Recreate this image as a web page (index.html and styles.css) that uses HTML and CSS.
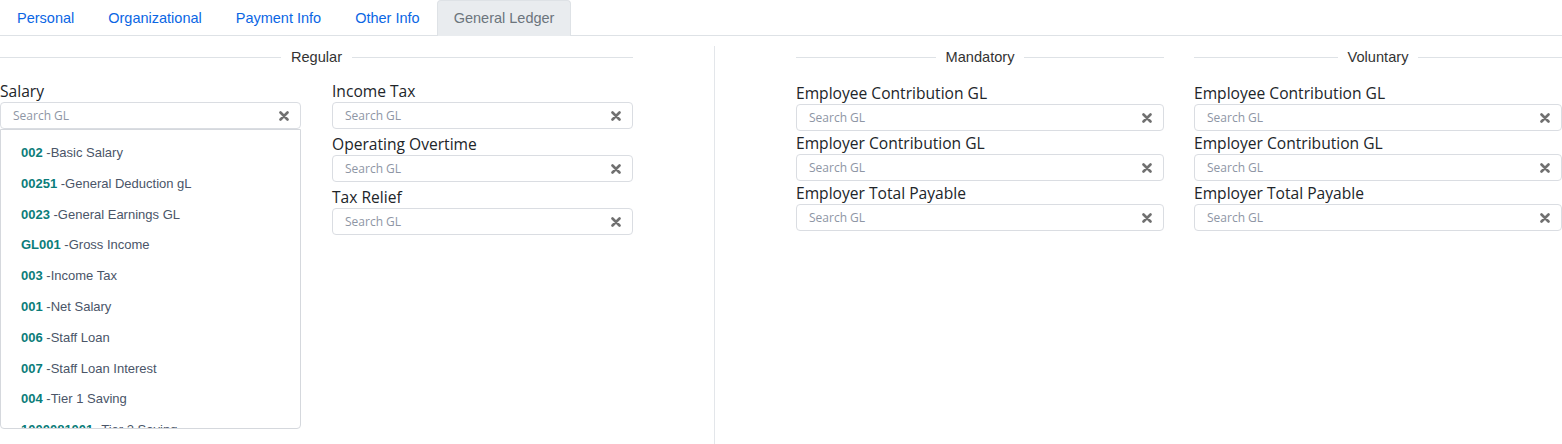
FILE: index.html
```html
<!DOCTYPE html>
<html lang="en">
<head>
<meta charset="utf-8">
<title>General Ledger</title>
<link rel="stylesheet" href="styles.css">
</head>
<body>
<nav class="tabs">
  <a class="tab" href="#">Personal</a>
  <a class="tab" href="#">Organizational</a>
  <a class="tab" href="#">Payment Info</a>
  <a class="tab" href="#">Other Info</a>
  <a class="tab active" href="#">General Ledger</a>
</nav>
<main class="content">
  <section class="regular">
    <h3 class="sec-title"><span>Regular</span></h3>
    <div class="regular-grid">
      <div class="col">
        <div class="field">
          <label class="label">Salary</label>
          <div class="input"><span class="ph">Search GL</span><svg class="clear" viewBox="0 0 10 10"><path d="M1.5 1.5 8.5 8.5M8.5 1.5 1.5 8.5"/></svg></div>
          <ul class="dropdown">
            <li><b>002</b> -Basic Salary</li>
            <li><b>00251</b> -General Deduction gL</li>
            <li><b>0023</b> -General Earnings GL</li>
            <li><b>GL001</b> -Gross Income</li>
            <li><b>003</b> -Income Tax</li>
            <li><b>001</b> -Net Salary</li>
            <li><b>006</b> -Staff Loan</li>
            <li><b>007</b> -Staff Loan Interest</li>
            <li><b>004</b> -Tier 1 Saving</li>
            <li><b>1000081001</b> -Tier 2 Saving</li>
          </ul>
        </div>
      </div>
      <div class="col col-fields">
        <div class="field">
          <label class="label">Income Tax</label>
          <div class="input"><span class="ph">Search GL</span><svg class="clear" viewBox="0 0 10 10"><path d="M1.5 1.5 8.5 8.5M8.5 1.5 1.5 8.5"/></svg></div>
        </div>
        <div class="field">
          <label class="label">Operating Overtime</label>
          <div class="input"><span class="ph">Search GL</span><svg class="clear" viewBox="0 0 10 10"><path d="M1.5 1.5 8.5 8.5M8.5 1.5 1.5 8.5"/></svg></div>
        </div>
        <div class="field">
          <label class="label">Tax Relief</label>
          <div class="input"><span class="ph">Search GL</span><svg class="clear" viewBox="0 0 10 10"><path d="M1.5 1.5 8.5 8.5M8.5 1.5 1.5 8.5"/></svg></div>
        </div>
      </div>
    </div>
  </section>
  <div class="vdivider"></div>
  <section class="pension">
    <div class="group">
      <h3 class="sec-title"><span>Mandatory</span></h3>
      <div class="group-fields">
        <div class="field">
          <label class="label">Employee Contribution GL</label>
          <div class="input"><span class="ph">Search GL</span><svg class="clear" viewBox="0 0 10 10"><path d="M1.5 1.5 8.5 8.5M8.5 1.5 1.5 8.5"/></svg></div>
        </div>
        <div class="field">
          <label class="label">Employer Contribution GL</label>
          <div class="input"><span class="ph">Search GL</span><svg class="clear" viewBox="0 0 10 10"><path d="M1.5 1.5 8.5 8.5M8.5 1.5 1.5 8.5"/></svg></div>
        </div>
        <div class="field">
          <label class="label">Employer Total Payable</label>
          <div class="input"><span class="ph">Search GL</span><svg class="clear" viewBox="0 0 10 10"><path d="M1.5 1.5 8.5 8.5M8.5 1.5 1.5 8.5"/></svg></div>
        </div>
      </div>
    </div>
    <div class="group">
      <h3 class="sec-title"><span>Voluntary</span></h3>
      <div class="group-fields">
        <div class="field">
          <label class="label">Employee Contribution GL</label>
          <div class="input"><span class="ph">Search GL</span><svg class="clear" viewBox="0 0 10 10"><path d="M1.5 1.5 8.5 8.5M8.5 1.5 1.5 8.5"/></svg></div>
        </div>
        <div class="field">
          <label class="label">Employer Contribution GL</label>
          <div class="input"><span class="ph">Search GL</span><svg class="clear" viewBox="0 0 10 10"><path d="M1.5 1.5 8.5 8.5M8.5 1.5 1.5 8.5"/></svg></div>
        </div>
        <div class="field">
          <label class="label">Employer Total Payable</label>
          <div class="input"><span class="ph">Search GL</span><svg class="clear" viewBox="0 0 10 10"><path d="M1.5 1.5 8.5 8.5M8.5 1.5 1.5 8.5"/></svg></div>
        </div>
      </div>
    </div>
  </section>
</main>
</body>
</html>
```
FILE: styles.css
```css
* { box-sizing: border-box; }

html, body {
  margin: 0;
  padding: 0;
  background: #fff;
  height: 100%;
  overflow: hidden;
}

body {
  font-family: "Liberation Sans", Arial, sans-serif;
  color: #333;
}

.tabs {
  display: flex;
  border-bottom: 1px solid #dee2e6;
  height: 36px;
}

.tab {
  display: block;
  padding: 8px 16px;
  font-size: 14.5px;
  line-height: 19px;
  color: #0b66e4;
  text-decoration: none;
  border: 1px solid transparent;
  border-bottom: none;
  border-radius: 4px 4px 0 0;
  height: 36px;
}

.tab.active {
  color: #6c757d;
  background: #e9ecef;
  border-color: #dee2e6;
}

.content {
  display: flex;
  margin-top: 10px;
  height: calc(100% - 46px);
}

.sec-title {
  display: flex;
  align-items: center;
  gap: 10px;
  margin: 2px 0 0;
  font-size: 14.6px;
  font-weight: normal;
  line-height: 18px;
  color: #333;
}

.sec-title::before,
.sec-title::after {
  content: "";
  flex: 1;
  height: 1px;
  background: #dee2e6;
}

.regular {
  width: 633px;
  flex: none;
}

.regular-grid {
  display: grid;
  grid-template-columns: 301px 301px;
  column-gap: 31px;
  margin-top: 14px;
}

.col-fields {
  display: flex;
  flex-direction: column;
  gap: 4px;
}

.label {
  display: block;
  font-family: "Open Sans", "Noto Sans", sans-serif;
  font-size: 15.6px;
  line-height: 22px;
  color: #212529;
}

.input {
  display: flex;
  align-items: center;
  justify-content: space-between;
  height: 27px;
  padding: 0 11px 0 12px;
  border: 1px solid #dadde2;
  border-radius: 4px;
  background: #fff;
}

.ph {
  font-family: "Open Sans", "Noto Sans", sans-serif;
  font-size: 12px;
  color: #8e96a5;
}

.clear {
  width: 10px;
  height: 10px;
  fill: none;
  stroke: #707070;
  stroke-width: 2.6;
  stroke-linecap: round;
}

.dropdown {
  list-style: none;
  margin: 0;
  padding: 8px 0 0 20px;
  height: 300px;
  overflow: hidden;
  border: 1px solid #d5d8dd;
  border-radius: 0 0 4px 4px;
  background: #fff;
}

.dropdown li {
  height: 30.8px;
  line-height: 30.8px;
  font-size: 13px;
  color: #4a5568;
  white-space: nowrap;
}

.dropdown b {
  color: #0b7d7a;
  font-weight: bold;
}

.vdivider {
  width: 1px;
  flex: none;
  margin-left: 81px;
  background: #e3e6ea;
}

.pension {
  flex: 1;
  display: grid;
  grid-template-columns: 368px 368px;
  column-gap: 30px;
  padding-left: 81px;
}

.group-fields {
  display: flex;
  flex-direction: column;
  gap: 1px;
  margin-top: 16px;
}
```
